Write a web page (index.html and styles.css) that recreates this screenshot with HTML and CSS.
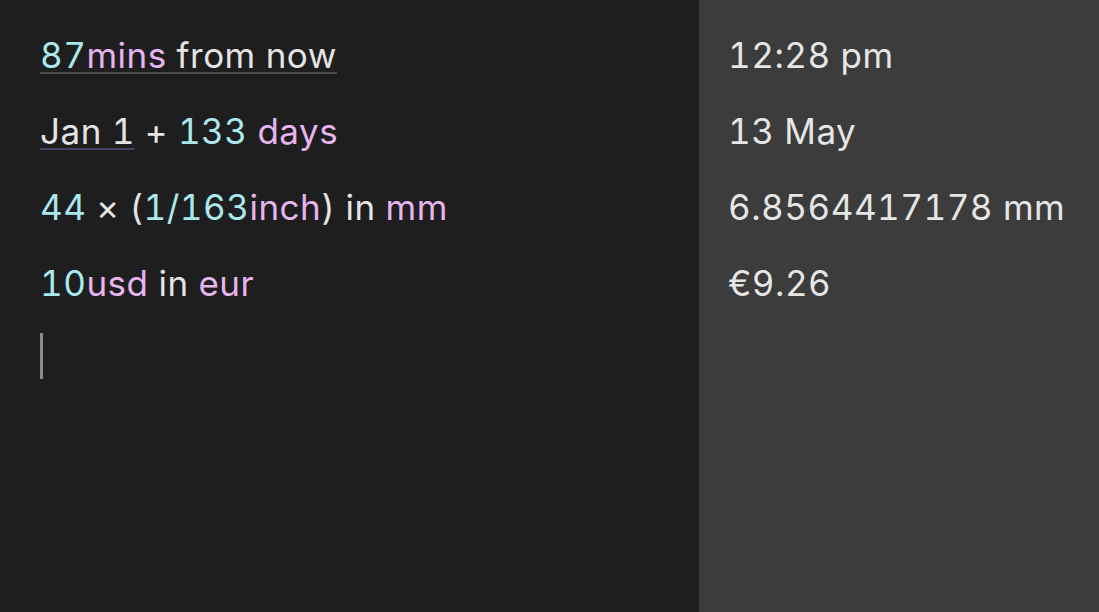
FILE: index.html
```html
<!DOCTYPE html>
<html lang="en">
<head>
  <meta charset="UTF-8">
  <meta name="viewport" content="width=device-width, initial-scale=1.0">
  <title>Calculator notes</title>
  <link rel="stylesheet" href="styles.css">
</head>
<body>
  <div class="container">
    <div class="editor">
      <div class="line"><span class="link"><span class="num">87</span><span class="unit">mins</span> from now</span></div>
      <div class="line"><span class="link date">Jan 1</span> + <span class="num">133</span> <span class="unit">days</span></div>
      <div class="line"><span class="num">44</span> × (<span class="num">1/163</span><span class="unit">inch</span>) in <span class="unit">mm</span></div>
      <div class="line"><span class="num">10</span><span class="unit">usd</span> in <span class="unit">eur</span></div>
      <div class="line"><span class="cursor"></span></div>
    </div>
    <div class="results">
      <div class="line">12:28 pm</div>
      <div class="line">13 May</div>
      <div class="line">6.8564417178 mm</div>
      <div class="line">€9.26</div>
    </div>
  </div>
</body>
</html>
```

FILE: styles.css
```css
html, body {
  height: 100vh;
  margin: 0;
  font-family: Inter, "Open Sans", sans-serif;
}

.container {
  display: grid;
  grid-template-columns: 699px 1fr;
  height: 100%;
}

.editor {
  background: #1e1e1e;
  color: #e4e4e4;
  padding: 17px 40px;
}

.results {
  background: #3c3c3c;
  color: #e6e6e6;
  padding: 17px 29px;
}

.line {
  font-size: 35px;
  line-height: 76px;
  height: 76px;
  white-space: nowrap;
  font-variant-numeric: tabular-nums;
  letter-spacing: 0.5px;
}

.num {
  color: #aae8ee;
}

.unit {
  color: #e6b4ee;
}

.link {
  text-decoration: underline;
  text-decoration-color: #4c4c4c;
  text-decoration-thickness: 2px;
  text-underline-offset: 4px;
}

.date {
  text-decoration-color: #4d3d5e;
}

.cursor {
  display: block;
  width: 3px;
  height: 46px;
  margin-top: 12px;
  background: #8c8c8c;
}
```
